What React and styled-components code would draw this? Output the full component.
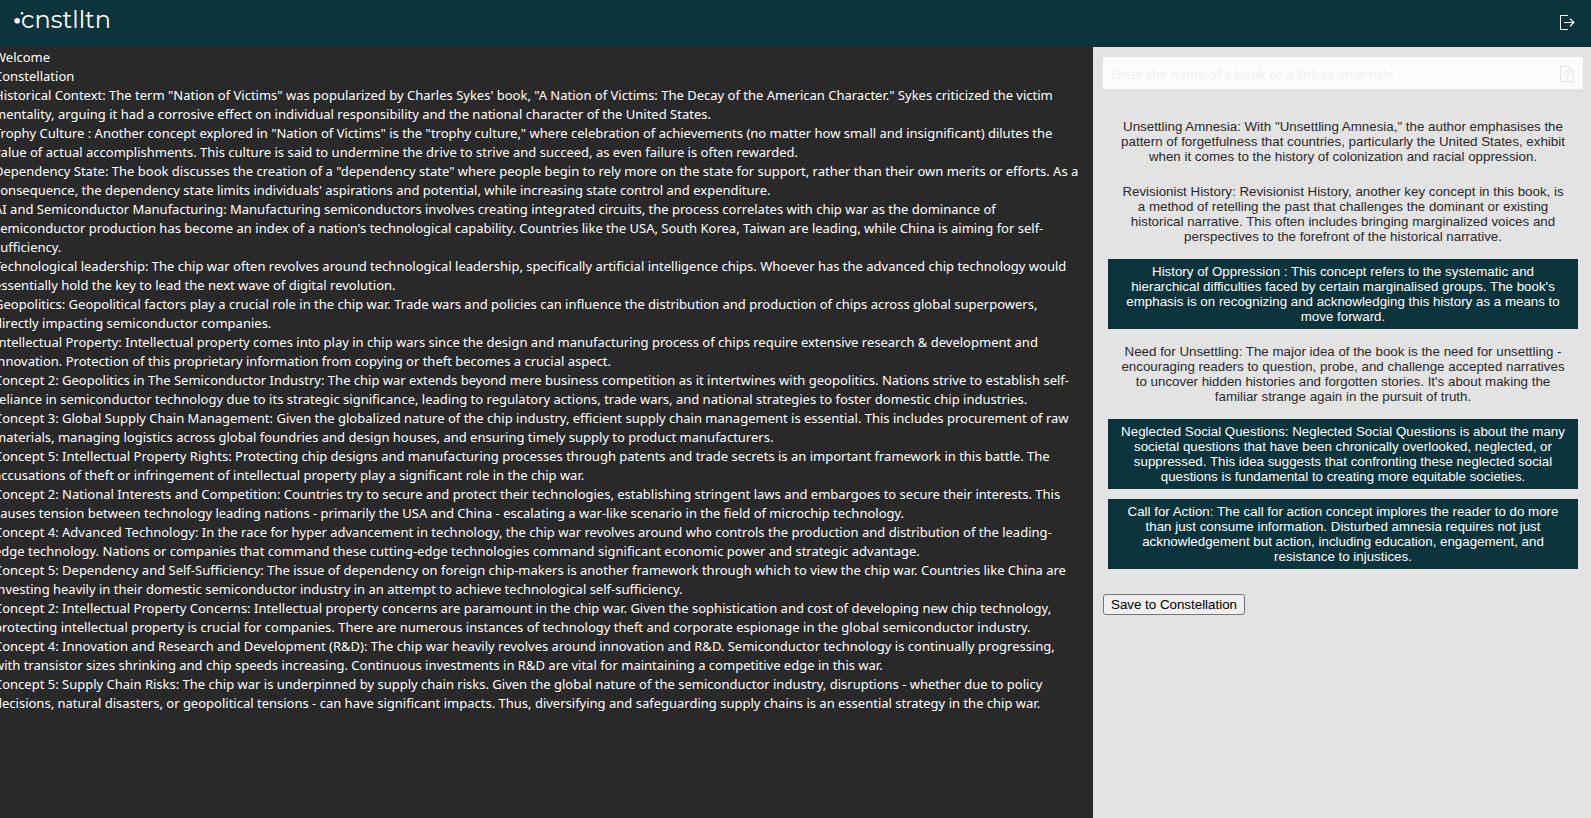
import React, { useState } from "react";
import styled, { createGlobalStyle } from "styled-components";

const GlobalStyle = createGlobalStyle`
  * { box-sizing: border-box; }
  body {
    margin: 0;
    background: #292929;
    font-family: "Segoe UI", "Noto Sans", "Open Sans", sans-serif;
    font-size: 13px;
    line-height: 19px;
  }
`;

const Page = styled.div`
  display: flex;
  flex-direction: column;
  min-height: 100vh;
  overflow: hidden;
`;

const Header = styled.header`
  display: flex;
  align-items: flex-start;
  justify-content: space-between;
  height: 47px;
  padding: 0 12px 0 14px;
  background: #0c343d;
  color: #ffffff;
`;

const Logo = styled.a`
  display: flex;
  align-items: flex-start;
  padding-top: 4px;
  color: #ffffff;
  text-decoration: none;
  font-family: Montserrat, Inter, sans-serif;
  font-size: 24px;
  font-weight: 400;
  line-height: 32px;
`;

const LogoDots = styled.svg`
  width: 10px;
  height: 16px;
  margin: 7px -3px 0 0;
`;

const IconButton = styled.button`
  display: flex;
  align-items: center;
  justify-content: center;
  width: 24px;
  height: 24px;
  margin-top: ${(p) => p.$top || 0}px;
  padding: 0;
  border: 0;
  background: transparent;
  color: ${(p) => p.$color};
`;

const Columns = styled.div`
  display: flex;
  flex: 1;
`;

const ConstellationPane = styled.main`
  flex: 1;
  min-width: 0;
  margin-left: -6px;
  padding-top: 1px;
  color: #ffffff;
`;

const Heading = styled.h1`
  margin: 0;
  font-size: inherit;
  font-weight: 400;
`;

const Saved = styled.p`
  margin: 0;
  white-space: pre;
`;

const SidePane = styled.aside`
  flex: 0 0 498px;
  padding: 10px 8px 10px 10px;
  background: #e3e3e3;
`;

const SearchBox = styled.form`
  display: flex;
  align-items: center;
  height: 32px;
  margin-bottom: 25px;
  padding: 2px 4px 0 8px;
  border-radius: 2px;
  background: #fcfcfc;
`;

const SearchInput = styled.input`
  flex: 1;
  min-width: 0;
  padding: 0;
  border: 0;
  outline: 0;
  background: transparent;
  font: inherit;
  color: #292929;
  &::placeholder { color: #efefef; opacity: 1; }
`;

const ConceptList = styled.div`
  display: flex;
  flex-direction: column;
  gap: 10px;
  padding: 0 5px;
  margin-bottom: 25px;
`;

const Concept = styled.button`
  padding: 5px 10px;
  border: 0;
  font-family: Arial, "Liberation Sans", sans-serif;
  line-height: 15px;
  text-align: center;
  background: ${(p) => (p.$selected ? "#0c343d" : "transparent")};
  color: ${(p) => (p.$selected ? "#ffffff" : "#292929")};
`;

const SaveButton = styled.button`
  display: block;
  height: 21px;
  padding: 0 7px;
  border: 1px solid #767676;
  border-radius: 3px;
  background: #efefef;
  color: #000000;
  font-family: Arial, "Liberation Sans", sans-serif;
`;

const saved = [
  `Historical Context: The term "Nation of Victims" was popularized by Charles Sykes' book, "A Nation of Victims: The Decay of the American Character." Sykes criticized the victim
mentality, arguing it had a corrosive effect on individual responsibility and the national character of the United States.`,
  `Trophy Culture : Another concept explored in "Nation of Victims" is the "trophy culture," where celebration of achievements (no matter how small and insignificant) dilutes the
value of actual accomplishments. This culture is said to undermine the drive to strive and succeed, as even failure is often rewarded.`,
  `Dependency State: The book discusses the creation of a "dependency state" where people begin to rely more on the state for support, rather than their own merits or efforts. As a
consequence, the dependency state limits individuals' aspirations and potential, while increasing state control and expenditure.`,
  `AI and Semiconductor Manufacturing: Manufacturing semiconductors involves creating integrated circuits, the process correlates with chip war as the dominance of
semiconductor production has become an index of a nation's technological capability. Countries like the USA, South Korea, Taiwan are leading, while China is aiming for self-
sufficiency.`,
  `Technological leadership: The chip war often revolves around technological leadership, specifically artificial intelligence chips. Whoever has the advanced chip technology would
essentially hold the key to lead the next wave of digital revolution.`,
  `Geopolitics: Geopolitical factors play a crucial role in the chip war. Trade wars and policies can influence the distribution and production of chips across global superpowers,
directly impacting semiconductor companies.`,
  `Intellectual Property: Intellectual property comes into play in chip wars since the design and manufacturing process of chips require extensive research & development and
innovation. Protection of this proprietary information from copying or theft becomes a crucial aspect.`,
  `Concept 2: Geopolitics in The Semiconductor Industry: The chip war extends beyond mere business competition as it intertwines with geopolitics. Nations strive to establish self-
reliance in semiconductor technology due to its strategic significance, leading to regulatory actions, trade wars, and national strategies to foster domestic chip industries.`,
  `Concept 3: Global Supply Chain Management: Given the globalized nature of the chip industry, efficient supply chain management is essential. This includes procurement of raw
materials, managing logistics across global foundries and design houses, and ensuring timely supply to product manufacturers.`,
  `Concept 5: Intellectual Property Rights: Protecting chip designs and manufacturing processes through patents and trade secrets is an important framework in this battle. The
accusations of theft or infringement of intellectual property play a significant role in the chip war.`,
  `Concept 2: National Interests and Competition: Countries try to secure and protect their technologies, establishing stringent laws and embargoes to secure their interests. This
causes tension between technology leading nations - primarily the USA and China - escalating a war-like scenario in the field of microchip technology.`,
  `Concept 4: Advanced Technology: In the race for hyper advancement in technology, the chip war revolves around who controls the production and distribution of the leading-
edge technology. Nations or companies that command these cutting-edge technologies command significant economic power and strategic advantage.`,
  `Concept 5: Dependency and Self-Sufficiency: The issue of dependency on foreign chip-makers is another framework through which to view the chip war. Countries like China are
investing heavily in their domestic semiconductor industry in an attempt to achieve technological self-sufficiency.`,
  `Concept 2: Intellectual Property Concerns: Intellectual property concerns are paramount in the chip war. Given the sophistication and cost of developing new chip technology,
protecting intellectual property is crucial for companies. There are numerous instances of technology theft and corporate espionage in the global semiconductor industry.`,
  `Concept 4: Innovation and Research and Development (R&D): The chip war heavily revolves around innovation and R&D. Semiconductor technology is continually progressing,
with transistor sizes shrinking and chip speeds increasing. Continuous investments in R&D are vital for maintaining a competitive edge in this war.`,
  `Concept 5: Supply Chain Risks: The chip war is underpinned by supply chain risks. Given the global nature of the semiconductor industry, disruptions - whether due to policy
decisions, natural disasters, or geopolitical tensions - can have significant impacts. Thus, diversifying and safeguarding supply chains is an essential strategy in the chip war.`,
];

const concepts = [
  `Unsettling Amnesia: With "Unsettling Amnesia," the author emphasises the pattern of forgetfulness that countries, particularly the United States, exhibit when it comes to the history of colonization and racial oppression.`,
  `Revisionist History: Revisionist History, another key concept in this book, is a method of retelling the past that challenges the dominant or existing historical narrative. This often includes bringing marginalized voices and perspectives to the forefront of the historical narrative.`,
  `History of Oppression : This concept refers to the systematic and hierarchical difficulties faced by certain marginalised groups. The book's emphasis is on recognizing and acknowledging this history as a means to move forward.`,
  `Need for Unsettling: The major idea of the book is the need for unsettling - encouraging readers to question, probe, and challenge accepted narratives to uncover hidden histories and forgotten stories. It's about making the familiar strange again in the pursuit of truth.`,
  `Neglected Social Questions: Neglected Social Questions is about the many societal questions that have been chronically overlooked, neglected, or suppressed. This idea suggests that confronting these neglected social questions is fundamental to creating more equitable societies.`,
  `Call for Action: The call for action concept implores the reader to do more than just consume information. Disturbed amnesia requires not just acknowledgement but action, including education, engagement, and resistance to injustices.`,
];

export default function App() {
  const [selected, setSelected] = useState([2, 4, 5]);
  const toggle = (i) =>
    setSelected((s) => (s.includes(i) ? s.filter((n) => n !== i) : [...s, i]));

  return (
    <Page>
      <GlobalStyle />
      <Header>
        <Logo href="#" aria-label="cnstlltn">
          <LogoDots viewBox="0 0 10 16" aria-hidden="true">
            <circle cx="3.2" cy="9.8" r="2.8" fill="#fff" />
            <circle cx="8" cy="2.2" r="1.3" fill="#fff" />
          </LogoDots>
          cnstlltn
        </Logo>
        <IconButton type="button" aria-label="Sign out" $color="#ffffff" $top={11}>
          <svg width="16" height="16" viewBox="0 0 16 16" fill="none" stroke="currentColor">
            <path d="M9 .5H1.500v14H9" />
            <path d="M5 7.500h10M11 3.800l3.800 3.700-3.800 3.700" strokeWidth="1.200" />
          </svg>
        </IconButton>
      </Header>
      <Columns>
        <ConstellationPane>
          <Heading>Welcome</Heading>
          <Heading as="h2">Constellation</Heading>
          {saved.map((text) => (
            <Saved key={text}>{text}</Saved>
          ))}
        </ConstellationPane>
        <SidePane>
          <SearchBox onSubmit={(e) => e.preventDefault()}>
            <SearchInput
              aria-label="Book name or article link"
              placeholder="Enter the name of a book or a link to an article"
            />
            <IconButton type="submit" aria-label="Look up" $color="#e3e3e3">
              <svg width="14" height="16" viewBox="0 0 14 16" fill="none" stroke="currentColor">
                <path d="M.5.5h8.600l3.900 3.900v11.100H.5zM9 .5v4h4" />
                <path d="M4.500 7.500c0-3 4.500-3 4.500-.3 0 1.800-2.200 1.900-2.200 4.100M6.800 12.300v1.200" />
              </svg>
            </IconButton>
          </SearchBox>
          <ConceptList>
            {concepts.map((text, i) => (
              <Concept
                key={text}
                type="button"
                aria-pressed={selected.includes(i)}
                $selected={selected.includes(i)}
                onClick={() => toggle(i)}
              >
                {text}
              </Concept>
            ))}
          </ConceptList>
          <SaveButton type="button">Save to Constellation</SaveButton>
        </SidePane>
      </Columns>
    </Page>
  );
}
